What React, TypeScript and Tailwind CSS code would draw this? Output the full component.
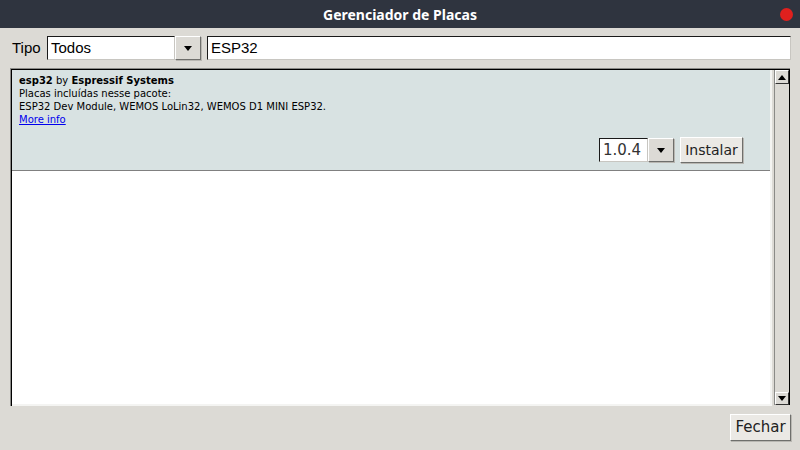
import React from "react";

function Tri({ up = false, size = 8 }: { up?: boolean; size?: number }) {
  return (
    <svg width={size} height={size / 2 + 1} viewBox="0 0 8 5" className="block">
      {up ? <polygon points="0,5 8,5 4,0" fill="#000" /> : <polygon points="0,0 8,0 4,5" fill="#000" />}
    </svg>
  );
}

function DropBtn({ h }: { h: string }) {
  return (
    <div
      className={`w-[26px] ${h} flex items-center justify-center bg-[#dcdad5] border border-t-white border-l-white border-b-[#6f6f6c] border-r-[#6f6f6c] shadow-[1px_1px_0_#b9b7b2]`}
    >
      <Tri />
    </div>
  );
}

export default function App() {
  const sans = { fontFamily: '"Liberation Sans", Arial, sans-serif' };
  const dv = { fontFamily: '"DejaVu Sans", Verdana, sans-serif' };
  return (
    <div className="w-[800px] h-[450px] bg-[#dcdad5] flex flex-col overflow-hidden">
      {/* Title bar */}
      <div className="h-[28px] bg-[#2f343f] flex items-center justify-center relative shrink-0">
        <span className="text-white text-[14px] font-bold" style={{ fontFamily: '"Noto Sans", sans-serif' }}>
          Gerenciador de Placas
        </span>
        <span className="absolute right-[7px] top-[8px] w-[13px] h-[13px] rounded-full bg-[#e0201e]" />
      </div>

      <div className="flex-1 flex flex-col pt-[8px] pl-[10px] pr-[9px] pb-[9px]">
        {/* Top row */}
        <div className="h-[24px] flex items-center shrink-0" style={sans}>
          <span className="text-[15px] text-black ml-[2px] w-[35px]">Tipo</span>
          <div className="w-[128px] h-[24px] bg-white border border-t-[#1a1a1a] border-l-[#1a1a1a] border-b-[#c8c6c1] border-r-[#c8c6c1] flex items-center pl-[3px] text-[15px] text-black">
            Todos
          </div>
          <DropBtn h="h-[24px]" />
          <div className="ml-[6px] flex-1 h-[24px] bg-white border border-t-[#1a1a1a] border-l-[#1a1a1a] border-b-[#c8c6c1] border-r-[#c8c6c1] flex items-center pl-[3px] text-[15px] text-black">
            ESP32
          </div>
        </div>

        {/* List panel */}
        <div className="mt-[8px] mr-[1px] h-[338px] border-t border-l border-t-[#8a8a87] border-l-[#8a8a87] flex shrink-0">
          <div className="flex-1 flex border-t border-l border-t-black border-l-black">
            <div className="flex-1 bg-white border-r-2 border-b-2 border-r-[#f4f4f2] border-b-[#f4f4f2] flex flex-col">
              <div className="h-[101px] bg-[#d8e2e2] border-b border-b-[#808080] flex flex-col pl-[7px] pr-[27px] pt-[4px]" style={dv}>
                <div className="text-[10px] leading-[13px] text-black">
                  <b>esp32</b> by <b>Espressif Systems</b>
                </div>
                <div className="text-[10px] leading-[13px] text-black">Placas incluídas nesse pacote:</div>
                <div className="text-[10px] leading-[13px] text-black">ESP32 Dev Module, WEMOS LoLin32, WEMOS D1 MINI ESP32.</div>
                <div className="text-[10px] leading-[13px] text-[#0000ee] underline">More info</div>
                <div className="flex justify-end items-center mt-[11px]">
                  <div className="w-[49px] h-[24px] bg-white border border-t-[#1a1a1a] border-l-[#1a1a1a] border-b-[#c8c6c1] border-r-[#c8c6c1] flex items-center pl-[3px] text-[15px] text-[#333]">
                    1.0.4
                  </div>
                  <DropBtn h="h-[24px]" />
                  <div className="ml-[6px] w-[63px] h-[26px] bg-[#ebe9e5] border border-t-white border-l-white border-b-[#6f6f6c] border-r-[#6f6f6c] shadow-[1px_1px_0_#b9b7b2] flex items-center justify-center text-[14px] text-[#222]">
                    Instalar
                  </div>
                </div>
              </div>
            </div>
            {/* Scrollbar */}
            <div className="w-[18px] pl-[2px] pb-[1px] bg-[#dcdad5] flex">
              <div className="w-[16px] border-l border-l-[#8a8a87] border-r border-r-black flex flex-col justify-between">
                <div className="h-[14px] bg-[#dcdad5] border border-t-white border-l-white border-b-[#333] border-r-[#333] flex items-center justify-center">
                  <Tri up />
                </div>
                <div className="h-[13px] bg-[#dcdad5] border border-t-white border-l-white border-b-[#333] border-r-[#333] flex items-center justify-center">
                  <Tri />
                </div>
              </div>
            </div>
          </div>
        </div>

        {/* Bottom */}
        <div className="mt-[8px] flex justify-end shrink-0">
          <div
            className="w-[61px] h-[27px] bg-[#ebe9e5] border border-t-white border-l-white border-b-[#6f6f6c] border-r-[#6f6f6c] shadow-[1px_1px_0_#b9b7b2] flex items-center justify-center text-[15px] text-[#222]"
            style={dv}
          >
            Fechar
          </div>
        </div>
      </div>
    </div>
  );
}
